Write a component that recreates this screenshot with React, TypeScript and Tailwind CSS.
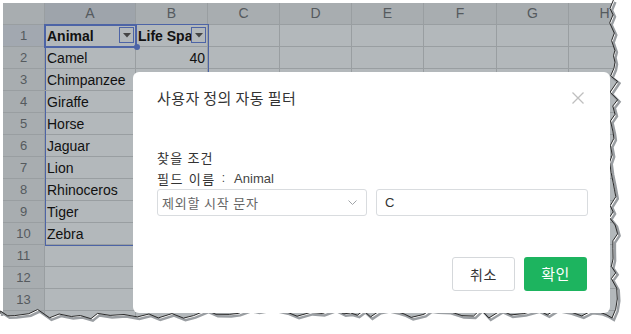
import React from 'react';

const COLS = [
  { name: '', w: 42 },
  { name: 'A', w: 91 },
  { name: 'B', w: 72 },
  { name: 'C', w: 72 },
  { name: 'D', w: 72 },
  { name: 'E', w: 72 },
  { name: 'F', w: 73 },
  { name: 'G', w: 72 },
  { name: 'H', w: 72 },
];

const ANIMALS = ['Camel', 'Chimpanzee', 'Giraffe', 'Horse', 'Jaguar', 'Lion', 'Rhinoceros', 'Tiger', 'Zebra'];

const KR = { fontFamily: '"Noto Sans CJK KR", sans-serif' };

const FilterButton = () => (
  <div className="absolute right-[1px] top-[2px] w-[15px] h-[16px] border border-[#4d64a6] bg-[#b3b8bb] flex items-center justify-center">
    <svg width="8" height="5" viewBox="0 0 8 5">
      <path d="M0 0 L8 0 L4 4.5 Z" fill="#444" />
    </svg>
  </div>
);

// torn paper edge along the right and bottom
const TornEdge = () => {
  let seed = 7;
  const rnd = () => {
    seed = (seed * 9301 + 49297) % 233280;
    return seed / 233280;
  };
  const right: [number, number][] = [];
  for (let y = 0; y <= 316; y += 5 + rnd() * 6) {
    right.push([609 + rnd() * 9, y]);
  }
  right.push([612, 318]);
  const bottom: [number, number][] = [];
  for (let x = 606; x >= 0; x -= 6 + rnd() * 8) {
    bottom.push([x, 309 + rnd() * 10]);
  }
  bottom.push([0, 314]);
  const edge = [...right, ...bottom];
  const line = edge.map(([x, y]) => `${x.toFixed(1)},${y.toFixed(1)}`).join(' ');
  const shadow = edge.map(([x, y]) => `${(x + 2).toFixed(1)},${(y + 2).toFixed(1)}`).join(' ');
  const fill = `${line} 0,334 631,334 631,0`;
  return (
    <svg className="absolute inset-0 pointer-events-none" width="631" height="334" viewBox="0 0 631 334">
      <polygon points={fill} fill="#ffffff" />
      <polyline points={shadow} fill="none" stroke="#9a9ea2" strokeWidth="2.5" />
      <polyline points={line} fill="none" stroke="#2a2a2a" strokeWidth="1" />
    </svg>
  );
};

export default function App() {
  return (
    <div
      className="relative w-[631px] h-[334px] bg-white overflow-hidden"
      style={{ fontFamily: '"Liberation Sans", Arial, sans-serif' }}
    >
      <div className="pl-[3px] pt-[3px]">
        <div className="relative w-[640px] bg-[#b3b8bb]">
          {/* column headers */}
          <div className="flex h-[22px]">
            {COLS.map((c, i) => (
              <div
                key={i}
                style={{ width: c.w }}
                className={`shrink-0 h-full border-r border-b border-[#999ea1] flex items-center justify-center text-[14px] text-[#555a5e] ${
                  c.name === 'A' ? 'bg-[#9ea4ab]' : 'bg-[#a8adb0]'
                }`}
              >
                {c.name}
              </div>
            ))}
          </div>
          {Array.from({ length: 14 }).map((_, r) => (
            <div key={r} className="flex h-[22px]">
              {COLS.map((c, i) => {
                const base = 'shrink-0 h-full border-r border-b border-[#999ea1] relative';
                if (i === 0)
                  return (
                    <div
                      key={i}
                      style={{ width: c.w }}
                      className={`${base} flex items-center justify-center pt-[1px] text-[13px] text-[#555a5e] ${
                        r === 0 ? 'bg-[#a2a8b0]' : 'bg-[#a8adb0]'
                      }`}
                    >
                      {r + 1}
                    </div>
                  );
                let content: React.ReactNode = null;
                if (i === 1 && r === 0) content = <span className="font-bold">Animal</span>;
                if (i === 1 && r > 0 && r <= 9) content = ANIMALS[r - 1];
                if (i === 2 && r === 0) content = <span className="font-bold">Life Span</span>;
                if (i === 2 && r === 1) content = <span className="ml-auto pr-[2px]">40</span>;
                return (
                  <div
                    key={i}
                    style={{ width: c.w }}
                    className={`${base} flex items-center pl-[2px] pt-[2px] text-[14px] text-[#111] whitespace-nowrap ${
                      i === 1 && r === 2 ? 'overflow-visible z-[1]' : 'overflow-hidden'
                    }`}
                  >
                    {content}
                    {r === 0 && (i === 1 || i === 2) && <FilterButton />}
                  </div>
                );
              })}
            </div>
          ))}
          {/* selected range A1:B10 */}
          <div className="absolute left-[42px] top-[21px] w-[164px] h-[222px] border border-[#4d64a6] pointer-events-none" />
          <div className="absolute left-[41px] top-[21px] w-[93px] h-[24px] border-2 border-[#4d64a6] pointer-events-none" />
          <div className="absolute left-[131px] top-[41px] w-[6px] h-[6px] rounded-full bg-[#4d64a6]" />

          {/* dialog */}
          <div
            className="absolute left-[130px] top-[69px] w-[477px] h-[241px] bg-white rounded-md pl-[24px] pr-[22px] z-10"
            style={{ fontFamily: '"Liberation Sans", "Noto Sans CJK KR", sans-serif' }}
          >
            <div className="mt-[16px] h-[20px] flex items-center justify-between">
              <span className="text-[15px] text-[#333] tracking-[0.4px]" style={KR}>
                사용자 정의 자동 필터
              </span>
              <svg className="mr-[4px]" width="12" height="12" viewBox="0 0 12 12">
                <path d="M0.5 0.5 L11.5 11.5 M11.5 0.5 L0.5 11.5" stroke="#bfbfbf" strokeWidth="1.3" />
              </svg>
            </div>
            <div className="mt-[39px] text-[13px] leading-[21px] text-[#333]">
              <div className="tracking-[1.2px]" style={KR}>찾을 조건</div>
              <div className="flex items-center">
                <span className="tracking-[1.6px]" style={KR}>필드 이름</span>
                <span className="ml-[6px] text-[12px] text-[#444]">:</span>
                <span className="ml-[9px] text-[13px] text-[#444]">Animal</span>
              </div>
            </div>
            <div className="flex gap-[9px]">
              <div className="w-[210px] h-[27px] border border-[#d9dcdf] rounded-[3px] flex items-center justify-between pl-[4px] pr-[9px]">
                <span className="text-[13px] text-[#666] tracking-[0.8px]" style={KR}>
                  제외할 시작 문자
                </span>
                <svg width="9" height="6" viewBox="0 0 9 6">
                  <path d="M0.5 0.5 L4.5 4.5 L8.5 0.5" fill="none" stroke="#a0a4a8" strokeWidth="1" />
                </svg>
              </div>
              <div className="flex-1 h-[27px] border border-[#d9dcdf] rounded-[3px] flex items-center pl-[8px] text-[13px] text-[#333]">
                C
              </div>
            </div>
            <div className="mt-[41px] flex justify-end gap-[9px] pr-[1px]">
              <button
                className="w-[63px] h-[34px] border border-[#d5d8db] rounded-[3px] bg-white text-[14px] text-[#333] tracking-[0.5px]"
                style={KR}
              >
                취소
              </button>
              <button
                className="w-[63px] h-[34px] rounded-[3px] bg-[#1db45f] text-[15px] text-white tracking-[0.5px]"
                style={KR}
              >
                확인
              </button>
            </div>
          </div>
        </div>
      </div>
      <TornEdge />
    </div>
  );
}
